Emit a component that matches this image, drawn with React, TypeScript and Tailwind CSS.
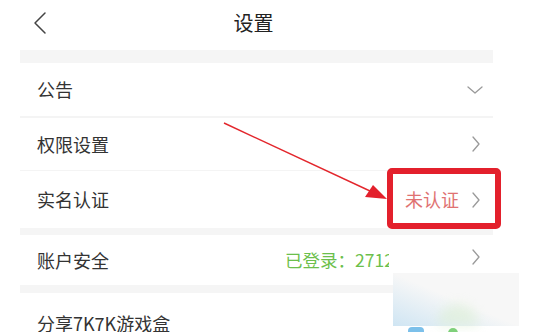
import React from "react";

const font = { fontFamily: '"Noto Sans CJK SC", "Noto Sans", sans-serif' };

function ChevronRight({ className = "" }: { className?: string }) {
    return (
        <svg width="10" height="18" viewBox="0 0 10 18" className={className}>
            <path d="M2 2 L8 9 L2 16" fill="none" stroke="#9a9a9a" strokeWidth="1.3" strokeLinecap="round" strokeLinejoin="round" />
        </svg>
    );
}

function ChevronDown() {
    return (
        <svg width="18" height="10" viewBox="0 0 18 10">
            <path d="M2 2 L9 8 L16 2" fill="none" stroke="#9a9a9a" strokeWidth="1.3" strokeLinecap="round" strokeLinejoin="round" />
        </svg>
    );
}

function Row({ label, right, h, pr = "pr-[12px]" }: { label: string; right: React.ReactNode; h: string; pr?: string }) {
    return (
        <div className={`flex items-center justify-between pl-[17px] ${pr} ${h}`}>
            <span className="text-[18px] text-[#333]">{label}</span>
            {right}
        </div>
    );
}

export default function App() {
    return (
        <div className="relative w-[537px] h-[332px] overflow-hidden bg-white" style={font}>
            {/* Header */}
            <div className="relative flex items-center justify-center h-[50px] pr-[30px]">
                <svg width="16" height="24" viewBox="0 0 16 24" className="absolute left-[32px] top-[11px]">
                    <path d="M13 2 L3 12 L13 22" fill="none" stroke="#444" strokeWidth="1.5" strokeLinecap="round" strokeLinejoin="round" />
                </svg>
                <span className="text-[20px] text-[#222] -mt-[4px]">设置</span>
            </div>

            {/* List */}
            <div className="mx-[20px] w-[473px]">
                <div className="h-[13px] bg-[#f5f5f5]" />
                <Row label="公告" h="h-[53px]" pr="pr-[9px]" right={<ChevronDown />} />
                <div className="h-[2px] bg-[#f4f4f4]" />
                <Row label="权限设置" h="h-[52px]" right={<ChevronRight />} />
                <div className="h-[1px] bg-[#f4f4f4]" />
                <Row
                    label="实名认证"
                    h="h-[57px]"
                    right={
                        <div className="flex items-center gap-[12px]">
                            <span className="text-[18px] text-[#e07272]">未认证</span>
                            <ChevronRight />
                        </div>
                    }
                />
                <div className="h-[7px] bg-[#f5f5f5]" />
                <div className="flex items-center pl-[17px] pr-[12px] h-[50px]">
                    <span className="text-[18px] text-[#333]">账户安全</span>
                    <div className="ml-[176px] w-[104px] overflow-hidden whitespace-nowrap">
                        <span className="text-[17.5px] text-[#6cbf4c]">已登录：2712</span>
                    </div>
                    <div className="ml-auto -mt-[6px]">
                        <ChevronRight />
                    </div>
                </div>
                <div className="h-[8px] bg-[#f5f5f5]" />
                <Row label="分享7K7K游戏盒" h="h-[60px]" right={<span />} />
            </div>

            {/* Annotation: red box */}
            <div className="absolute left-[387px] top-[168px] w-[114px] h-[61px] rounded-[5px] border-[6px] border-[#e3202c]" />

            {/* Annotation: arrow */}
            <svg className="absolute left-0 top-0" width="537" height="332" viewBox="0 0 537 332">
                <line x1="224" y1="123" x2="370" y2="191" stroke="#e3262c" strokeWidth="1.4" />
                <polygon points="387,199 365,197 373,185" fill="#e3202c" />
            </svg>

            {/* Watermark */}
            <div className="absolute left-[393px] top-[273px] w-[126px] h-[53px] bg-[#f7f7f7]">
                <div className="absolute inset-0 bg-gradient-to-tr from-[#cfe5f3] via-transparent to-transparent" />
                <div className="absolute left-[45px] bottom-0 w-[40px] h-[22px] rounded-t-full bg-[#dcefd4] opacity-60 blur-[6px]" />
            </div>
            <div className="absolute left-[408px] top-[327px] w-[16px] h-[8px] rounded-t-[4px] bg-[#7cc0ea]" />
            <div className="absolute left-[448px] top-[328px] w-[10px] h-[8px] rounded-t-full bg-[#7fd07a]" />
        </div>
    );
}
